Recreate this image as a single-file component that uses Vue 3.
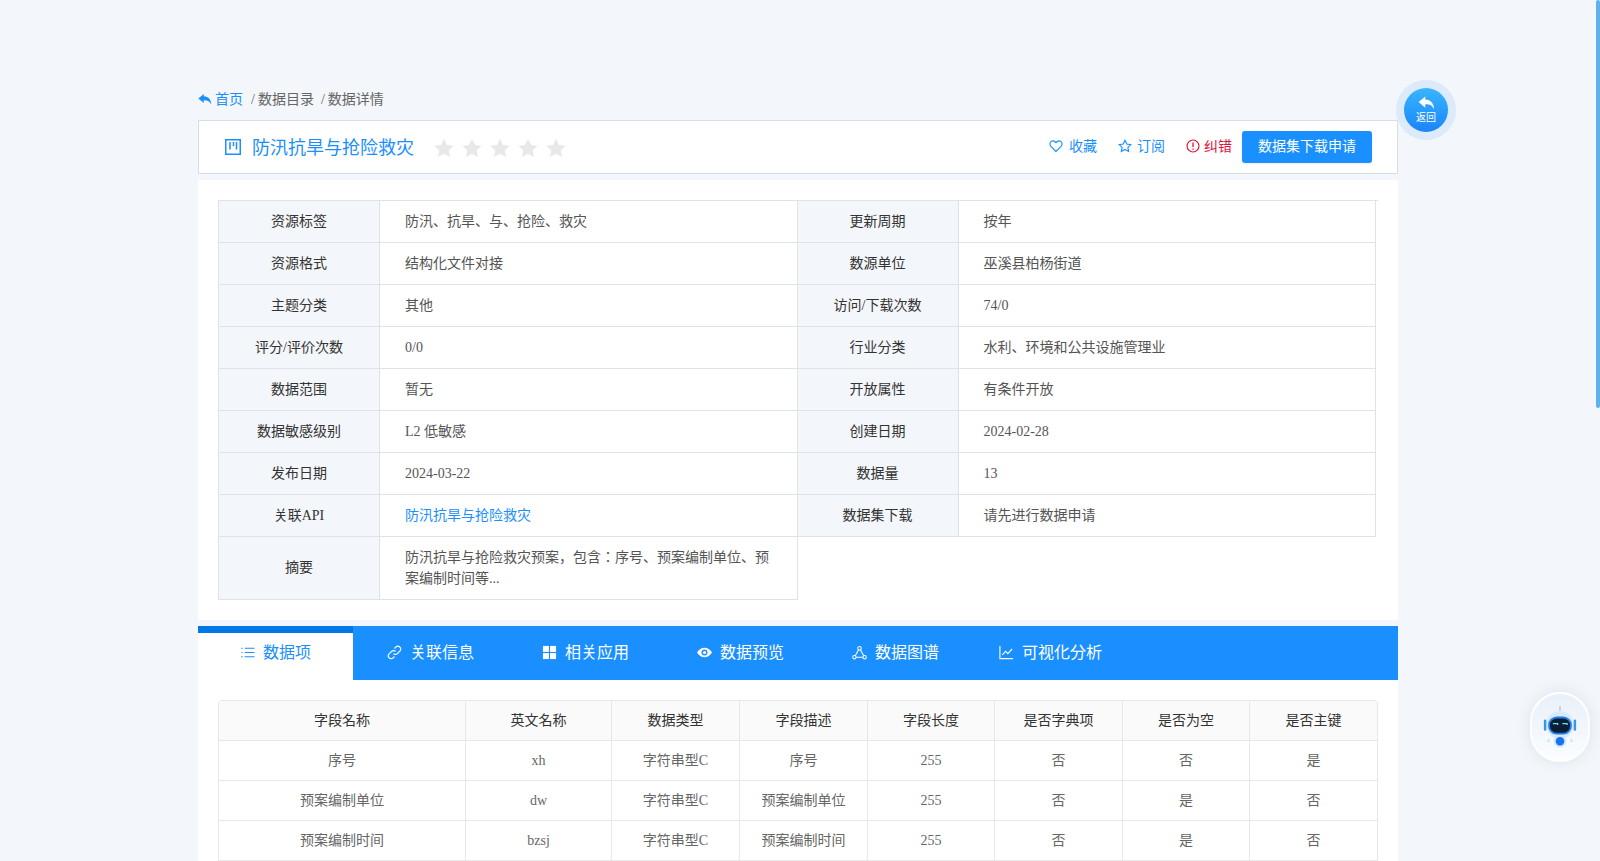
<template>
  <div class="page">
    <div class="main">
      <div class="crumb">
        <svg class="crumb-icon" viewBox="0 0 16 14"><path d="M6.6 0.6 0.4 5.800l6.200 5.200V7.900c4-.2 6.600.8 8.600 4.800C15 7.300 11.800 3.500 6.600 3.400z" fill="#1a8fff"/></svg>
        <span class="crumb-link">首页</span>
        <span class="crumb-sep">/</span><span>数据目录</span>
        <span class="crumb-sep second">/</span><span>数据详情</span>
      </div>

      <div class="title-bar">
        <svg class="title-icon" viewBox="0 0 16 16" fill="none" stroke="#1a8fff" stroke-width="1.500"><rect x="0.75" y="0.750" width="14.500" height="14.500"/><path d="M5 3v7.500M8.500 3v4M11.500 3v7.500"/></svg>
        <span class="title-text">防汛抗旱与抢险救灾</span>
        <div class="stars">
          <svg v-for="n in 5" :key="n" viewBox="0 0 20 20"><path d="M10 .8l2.900 6.100 6.600.9-4.800 4.600 1.200 6.600L10 15.800 4.100 19l1.200-6.600L.5 7.800l6.600-.9z" fill="#e8e8e8"/></svg>
        </div>
        <div class="actions">
          <span class="action">
            <svg viewBox="0 0 16 16" fill="none" stroke="#1a8fff" stroke-width="1.300"><path d="M8 14.300 2.200 8.500C.4 6.600.8 3.700 2.800 2.600c1.900-1 3.900-.4 5.200 1.500 1.300-1.900 3.300-2.500 5.200-1.500 2 1.100 2.400 4 .6 5.900z"/></svg>
            收藏
          </span>
          <span class="action star">
            <svg viewBox="0 0 16 16" fill="none" stroke="#1a8fff" stroke-width="1.300"><path d="M8 1.500l2 4.300 4.700.6-3.400 3.200.9 4.700L8 12l-4.200 2.300.9-4.700L1.300 6.400 6 5.800z"/></svg>
            订阅
          </span>
          <span class="action error">
            <svg viewBox="0 0 16 16" fill="none" stroke="#e0123c" stroke-width="1.300"><circle cx="8" cy="8" r="6.800"/><path d="M8 4v5.200M8 10.800v1.400" stroke-width="1.500"/></svg>
            纠错
          </span>
          <button class="apply-btn">数据集下载申请</button>
        </div>
      </div>

      <div class="info-panel">
        <div class="info-wrap">
          <table class="info-table">
            <colgroup>
              <col class="col-label" /><col class="col-value" /><col class="col-label" /><col class="col-value" />
            </colgroup>
            <tbody>
              <tr v-for="row in infoRows" :key="row[0]">
                <th>{{ row[0] }}</th>
                <td :class="{ link: row[0] === '关联API' }">{{ row[1] }}</td>
                <th>{{ row[2] }}</th>
                <td>{{ row[3] }}</td>
              </tr>
              <tr class="summary">
                <th>摘要</th>
                <td>防汛抗旱与抢险救灾预案，包含：序号、预案编制单位、预案编制时间等...</td>
              </tr>
            </tbody>
          </table>
        </div>
      </div>

      <div class="tabs">
        <div v-for="(tab, i) in tabs" :key="tab.name" class="tab" :class="{ active: i === 0 }">
          <svg class="tab-icon" viewBox="0 0 16 16" v-html="tab.icon"></svg>
          <span>{{ tab.name }}</span>
        </div>
      </div>

      <div class="fields-panel">
        <table class="fields-table">
          <colgroup>
            <col v-for="w in colWidths" :key="w.id" :style="{ width: w.px + 'px' }" />
          </colgroup>
          <thead>
            <tr><th v-for="h in headers" :key="h">{{ h }}</th></tr>
          </thead>
          <tbody>
            <tr v-for="row in fields" :key="row[1]">
              <td v-for="(cell, i) in row" :key="i">{{ cell }}</td>
            </tr>
          </tbody>
        </table>
      </div>
    </div>

    <div class="back-btn">
      <div class="back-inner">
        <svg viewBox="0 0 16 14"><path d="M6.800.5.600 5.700l6.200 5.200V7.800c3.900-.2 6.500.8 8.400 4.800C15 7.200 11.900 3.400 6.800 3.300z" fill="#fff"/></svg>
        <span>返回</span>
      </div>
    </div>

    <div class="robot">
      <svg viewBox="0 0 40 44">
        <rect x="19.300" y="0.500" width="1.400" height="3.500" fill="#eaa6a6"/>
        <path d="M14 10l2-4M26 10l-2-4M20 4v5" stroke="#a6d0f6" stroke-width="1" fill="none"/>
        <circle cx="20" cy="20" r="14.500" fill="#d8e9fb"/>
        <rect x="3" y="14" width="2.600" height="12" rx="1.300" fill="#3a94ee"/>
        <rect x="34.400" y="14" width="2.600" height="12" rx="1.300" fill="#3a94ee"/>
        <rect x="7.500" y="11" width="25" height="19" rx="9" fill="#1f7fe6"/>
        <rect x="9.500" y="13" width="21" height="15" rx="7" fill="#0d1d36"/>
        <path d="M12.500 18.500h5v1.500M22.500 18.500h5v1.500" stroke="#5fe8de" stroke-width="1.300" fill="none"/>
        <circle cx="20" cy="37" r="6.500" fill="#d2e6fb"/>
        <circle cx="20" cy="37" r="4.500" fill="#1574ee"/>
        <path d="M9 35l-2 1.500 2 1.500M31 35l2 1.500-2 1.500" stroke="#9cc8f4" stroke-width="0.800" fill="none"/>
      </svg>
    </div>

    <div class="scroll-thumb"></div>
  </div>
</template>

<script setup>
const infoRows = [
  ['资源标签', '防汛、抗旱、与、抢险、救灾', '更新周期', '按年'],
  ['资源格式', '结构化文件对接', '数源单位', '巫溪县柏杨街道'],
  ['主题分类', '其他', '访问/下载次数', '74/0'],
  ['评分/评价次数', '0/0', '行业分类', '水利、环境和公共设施管理业'],
  ['数据范围', '暂无', '开放属性', '有条件开放'],
  ['数据敏感级别', 'L2 低敏感', '创建日期', '2024-02-28'],
  ['发布日期', '2024-03-22', '数据量', '13'],
  ['关联API', '防汛抗旱与抢险救灾', '数据集下载', '请先进行数据申请'],
];

const tabs = [
  {
    name: '数据项',
    icon: '<path d="M5 3.500h10.500M5 8h10.500M5 12.500h10.500" stroke="currentColor" stroke-width="1.100" fill="none"/><path d="M1.500 3.500h1.200M1.500 8h1.200M1.500 12.500h1.200" stroke="currentColor" stroke-width="1.300" fill="none"/>',
  },
  {
    name: '关联信息',
    icon: '<path d="M6.800 9.200a3 3 0 0 0 4.300 0l2.600-2.600a3 3 0 0 0-4.300-4.300L8 3.700M9.200 6.800a3 3 0 0 0-4.300 0L2.300 9.400a3 3 0 0 0 4.300 4.300L8 12.300" stroke="currentColor" stroke-width="1.300" fill="none"/>',
  },
  {
    name: '相关应用',
    icon: '<rect x="1" y="1" width="6.400" height="6.400" fill="currentColor"/><rect x="8.600" y="1" width="6.400" height="6.400" fill="currentColor"/><rect x="1" y="8.600" width="6.400" height="6.400" fill="currentColor"/><rect x="8.600" y="8.600" width="6.400" height="6.400" fill="currentColor"/>',
  },
  {
    name: '数据预览',
    icon: '<path d="M0 8c2-3.300 4.800-5 8-5s6 1.700 8 5c-2 3.300-4.800 5-8 5s-6-1.700-8-5z" fill="currentColor"/><circle cx="8" cy="8" r="3.200" fill="#1a8fff"/><circle cx="8" cy="8" r="1.700" fill="currentColor"/>',
  },
  {
    name: '数据图谱',
    icon: '<circle cx="8" cy="3.500" r="1.900" stroke="currentColor" fill="none" stroke-width="1.100"/><circle cx="2.500" cy="13" r="1.800" stroke="currentColor" fill="none" stroke-width="1.100"/><circle cx="13.500" cy="13" r="1.800" stroke="currentColor" fill="none" stroke-width="1.100"/><path d="M7 5.200 3.500 11.400M9 5.200l3.500 6.200M4.300 13h7.400" stroke="currentColor" stroke-width="1.100" fill="none"/>',
  },
  {
    name: '可视化分析',
    icon: '<path d="M1 1v13.500h14" stroke="currentColor" stroke-width="1.200" fill="none"/><path d="M3.500 10.500 7 6.800l2.500 2.400 4.500-5" stroke="currentColor" stroke-width="1.200" fill="none"/>',
  },
];

const colWidths = [247, 146, 128, 128, 127, 128, 127, 127].map((px, id) => ({ id, px }));
const headers = ['字段名称', '英文名称', '数据类型', '字段描述', '字段长度', '是否字典项', '是否为空', '是否主键'];
const fields = [
  ['序号', 'xh', '字符串型C', '序号', '255', '否', '否', '是'],
  ['预案编制单位', 'dw', '字符串型C', '预案编制单位', '255', '否', '是', '否'],
  ['预案编制时间', 'bzsj', '字符串型C', '预案编制时间', '255', '否', '是', '否'],
];
</script>

<style scoped>
.page {
  position: relative;
  height: 861px;
  overflow: hidden;
  padding: 89px 4px 0 0;
  box-sizing: border-box;
  background: #f3f6fa;
  font-family: "Liberation Serif", "Noto Sans CJK JP", serif;
  font-size: 14px;
  line-height: 1.5;
  color: #666;
}
.main {
  width: 1200px;
  margin: 0 auto;
}
.crumb {
  display: flex;
  align-items: center;
  height: 20px;
  margin-bottom: 11px;
}
.crumb-icon {
  width: 14px;
  height: 13px;
  margin-right: 3px;
}
.crumb-link {
  color: #1a8fff;
}
.crumb-sep {
  margin: 0 3px 0 8px;
}
.crumb-sep.second {
  margin-left: 7px;
}
.title-bar {
  display: flex;
  align-items: center;
  height: 54px;
  box-sizing: border-box;
  padding: 0 25px 0 26px;
  background: #fff;
  border: 1px solid #d5dfea;
}
.title-icon {
  width: 16px;
  height: 16px;
  margin-right: 11px;
}
.title-text {
  padding-top: 2px;
  font-size: 18px;
  color: #1a8fff;
}
.stars {
  display: flex;
  gap: 8px;
  margin-left: 20px;
  padding-top: 2px;
}
.stars svg {
  width: 20px;
  height: 20px;
}
.actions {
  display: flex;
  align-items: center;
  margin-left: auto;
}
.action {
  display: flex;
  align-items: center;
  gap: 6px;
  margin-right: 21px;
  margin-bottom: 2px;
  color: #1a8fff;
}
.action svg {
  width: 14px;
  height: 14px;
}
.action.star {
  gap: 5px;
  margin-right: 21px;
}
.action.error {
  gap: 4px;
  margin-right: 10px;
  color: #e0123c;
}
.apply-btn {
  width: 130px;
  height: 32px;
  padding: 0 0 2px;
  border: 0;
  border-radius: 3px;
  background: #1a8fff;
  box-shadow: 0 1px 3px rgba(0, 0, 0, 0.08);
  color: #fff;
  font: inherit;
}
.info-panel {
  margin-top: 6px;
  padding: 20px;
  background: #fff;
}
.info-wrap {
  border-top: 1px solid #dfe3e8;
}
.info-table {
  width: 1158px;
  table-layout: fixed;
  border-collapse: collapse;
}
.col-label {
  width: 161px;
}
.info-table th,
.info-table td {
  height: 42px;
  box-sizing: border-box;
  padding: 0 25px;
  border: 1px solid #dfe3e8;
  font-weight: 400;
  line-height: 21px;
}
.info-table tr:first-child th,
.info-table tr:first-child td {
  height: 41px;
  border-top: 0;
}
.info-table th {
  padding: 0;
  background: #f3f6fa;
  color: #333;
  text-align: center;
}
.info-table td {
  color: #555;
  text-align: left;
}
.info-table td.link {
  color: #1a8fff;
}
.summary td,
.summary th {
  height: 63px;
}
.tabs {
  display: flex;
  height: 54px;
  margin-top: 6px;
  background: #1a8fff;
  color: #fff;
  font-size: 16px;
}
.tab {
  display: flex;
  align-items: center;
  justify-content: center;
  gap: 8px;
  width: 155px;
}
.tab.active {
  border-top: 7px solid #0077e6;
  padding-bottom: 7px;
  background: #fff;
  color: #1a8fff;
  box-sizing: border-box;
}
.tab-icon {
  width: 15px;
  height: 15px;
}
.fields-panel {
  height: 200px;
  padding: 20px;
  box-sizing: border-box;
  background: #fff;
}
.fields-table {
  width: 1160px;
  table-layout: fixed;
  border-collapse: separate;
  border-spacing: 0;
  border: 1px solid #e8e8e8;
  border-bottom: 0;
  border-radius: 4px 4px 0 0;
}
.fields-table th,
.fields-table td {
  height: 40px;
  box-sizing: border-box;
  padding: 0;
  border-right: 1px solid #e8e8e8;
  border-bottom: 1px solid #e8e8e8;
  text-align: center;
  font-weight: 400;
}
.fields-table th:last-child,
.fields-table td:last-child {
  border-right: 0;
}
.fields-table th {
  background: #fafafa;
  color: #333;
}
.fields-table td {
  color: #666;
}
.back-btn {
  position: absolute;
  left: 1396px;
  top: 80px;
  display: flex;
  align-items: center;
  justify-content: center;
  width: 60px;
  height: 60px;
  border-radius: 50%;
  background: #dceafa;
}
.back-inner {
  display: flex;
  flex-direction: column;
  align-items: center;
  justify-content: center;
  gap: 1px;
  width: 44px;
  height: 44px;
  border-radius: 50%;
  background: linear-gradient(#38b6ff, #1a84fb);
  color: #fff;
  font-size: 10px;
  line-height: 12px;
}
.back-inner svg {
  width: 17px;
  height: 15px;
}
.robot {
  position: absolute;
  left: 1530px;
  top: 692px;
  display: flex;
  align-items: center;
  justify-content: center;
  width: 60px;
  height: 70px;
  border: 2px solid #fff;
  box-sizing: border-box;
  border-radius: 30px;
  background: linear-gradient(#e9f0f9, #fbfdff);
  box-shadow: 0 0 14px rgba(120, 150, 190, 0.18);
}
.robot svg {
  width: 38px;
  height: 42px;
}
.scroll-thumb {
  position: absolute;
  right: 0;
  top: 0;
  width: 4px;
  height: 408px;
  border-radius: 2px;
  background: #5fb1ee;
}
</style>
